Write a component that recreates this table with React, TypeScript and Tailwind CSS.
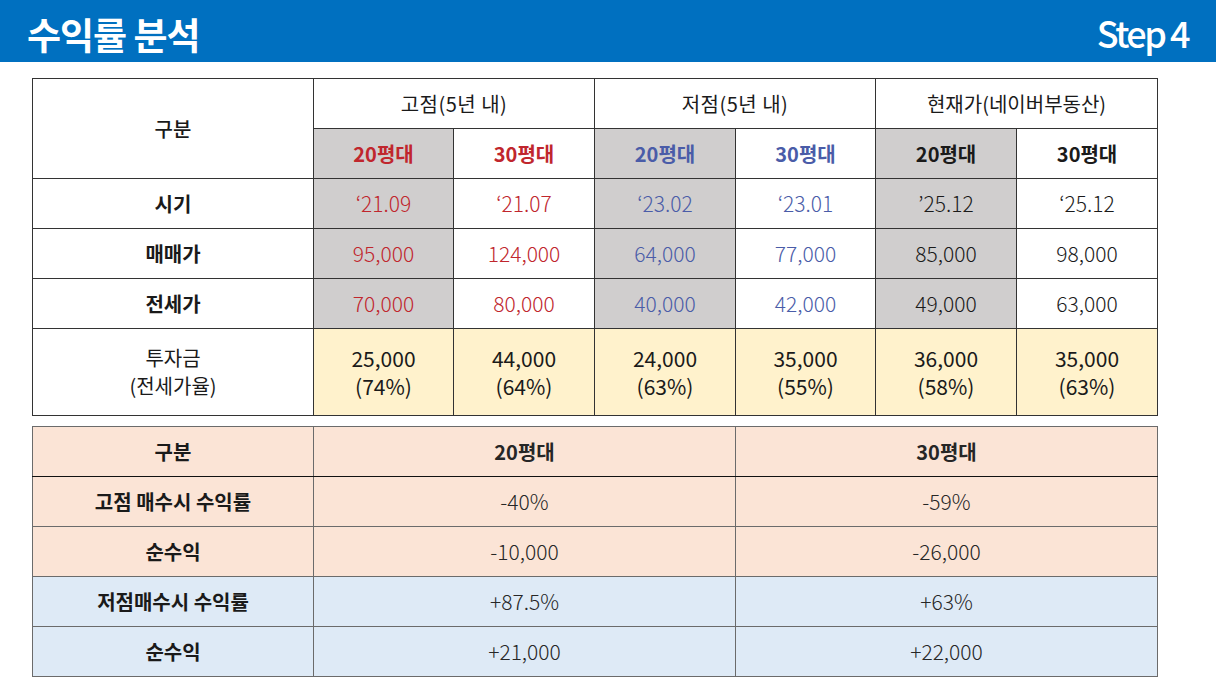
import React from "react";

const F = { fontFamily: '"Noto Sans CJK KR", "Noto Sans", sans-serif' };

const RED = "text-[#c0262d]";
const BLUE = "text-[#4a5ca8]";
const BLK = "text-[#1a1a1a]";

const groups = [
  { c: RED },
  { c: RED },
  { c: BLUE },
  { c: BLUE },
  { c: BLK },
  { c: BLK },
];

const rows: { label: string; vals: string[] }[] = [
  { label: "시기", vals: ["‘21.09", "‘21.07", "‘23.02", "‘23.01", "’25.12", "‘25.12"] },
  { label: "매매가", vals: ["95,000", "124,000", "64,000", "77,000", "85,000", "98,000"] },
  { label: "전세가", vals: ["70,000", "80,000", "40,000", "42,000", "49,000", "63,000"] },
];

const invest = [
  ["25,000", "(74%)"],
  ["44,000", "(64%)"],
  ["24,000", "(63%)"],
  ["35,000", "(55%)"],
  ["36,000", "(58%)"],
  ["35,000", "(63%)"],
];

const bottom = [
  { label: "구분", a: "20평대", b: "30평대", bg: "bg-[#fbe4d6]", head: true },
  { label: "고점 매수시 수익률", a: "-40%", b: "-59%", bg: "bg-[#fbe4d6]" },
  { label: "순수익", a: "-10,000", b: "-26,000", bg: "bg-[#fbe4d6]" },
  { label: "저점매수시 수익률", a: "+87.5%", b: "+63%", bg: "bg-[#deeaf6]" },
  { label: "순수익", a: "+21,000", b: "+22,000", bg: "bg-[#deeaf6]" },
];

export default function App() {
  return (
    <div className="w-[1216px] h-[684px] bg-white overflow-hidden" style={F}>
      <div className="h-[62px] bg-[#0070c0] flex items-center justify-between pl-[27px] pr-[28px]">
        <div className="text-white text-[37px] font-bold leading-none tracking-[-1px] pt-[6px]">수익률 분석</div>
        <div className="text-white text-[36px] font-medium leading-none tracking-[-2.5px] pt-[2px]">Step 4</div>
      </div>

      <div className="pl-[32px] pt-[16px]">
        <table className="table-fixed border-collapse w-[1125px] text-[20px]">
          <colgroup>
            <col className="w-[281px]" />
            <col className="w-[140px]" />
            <col className="w-[141px]" />
            <col className="w-[141px]" />
            <col className="w-[140px]" />
            <col className="w-[141px]" />
            <col className="w-[141px]" />
          </colgroup>
          <tbody>
            <tr className="h-[50px]">
              <td rowSpan={2} className="border border-[#333] text-center text-[#1a1a1a] font-medium">구분</td>
              <td colSpan={2} className="border border-[#333] text-center text-[#1a1a1a] tracking-[0.5px]">고점(5년 내)</td>
              <td colSpan={2} className="border border-[#333] text-center text-[#1a1a1a] tracking-[0.5px]">저점(5년 내)</td>
              <td colSpan={2} className="border border-[#333] text-center text-[#1a1a1a]">현재가(네이버부동산)</td>
            </tr>
            <tr className="h-[50px]">
              {groups.map((g, i) => (
                <td
                  key={i}
                  className={`border border-[#333] text-center font-bold ${g.c} ${i % 2 === 0 ? "bg-[#d0cece]" : "bg-white"}`}
                >
                  {i % 2 === 0 ? "20평대" : "30평대"}
                </td>
              ))}
            </tr>
            {rows.map((r) => (
              <tr key={r.label} className="h-[50px]">
                <td className="border border-[#333] text-center text-[#1a1a1a] font-bold">{r.label}</td>
                {r.vals.map((v, i) => (
                  <td
                    key={i}
                    className={`border border-[#333] text-center font-light text-[21px] ${groups[i].c} ${i % 2 === 0 ? "bg-[#d0cece]" : "bg-white"}`}
                  >
                    {v}
                  </td>
                ))}
              </tr>
            ))}
            <tr className="h-[87px]">
              <td className="border border-[#333] text-center text-[#1a1a1a] leading-[28px]">
                <div>투자금</div>
                <div>(전세가율)</div>
              </td>
              {invest.map((v, i) => (
                <td key={i} className="border border-[#333] text-center text-[#1a1a1a] bg-[#fff2cc] leading-[28px] text-[21px]">
                  <div>{v[0]}</div>
                  <div>{v[1]}</div>
                </td>
              ))}
            </tr>
          </tbody>
        </table>

        <table className="table-fixed border-collapse w-[1125px] text-[20px] mt-[10px]">
          <colgroup>
            <col className="w-[281px]" />
            <col className="w-[422px]" />
            <col className="w-[422px]" />
          </colgroup>
          <tbody>
            {bottom.map((r, i) => (
              <tr key={i} className={`h-[50px] ${r.bg}`}>
                <td
                  className={`border border-[#6b6b6b] text-center text-[#1a1a1a] font-bold ${r.head ? "border-b-[#111]" : ""}`}
                >
                  {r.label}
                </td>
                <td
                  className={`border border-[#6b6b6b] text-center text-[#262626] ${r.head ? "font-bold border-b-[#111]" : "font-light text-[21px]"}`}
                >
                  {r.a}
                </td>
                <td
                  className={`border border-[#6b6b6b] text-center text-[#262626] ${r.head ? "font-bold border-b-[#111]" : "font-light text-[21px]"}`}
                >
                  {r.b}
                </td>
              </tr>
            ))}
          </tbody>
        </table>
      </div>
    </div>
  );
}
